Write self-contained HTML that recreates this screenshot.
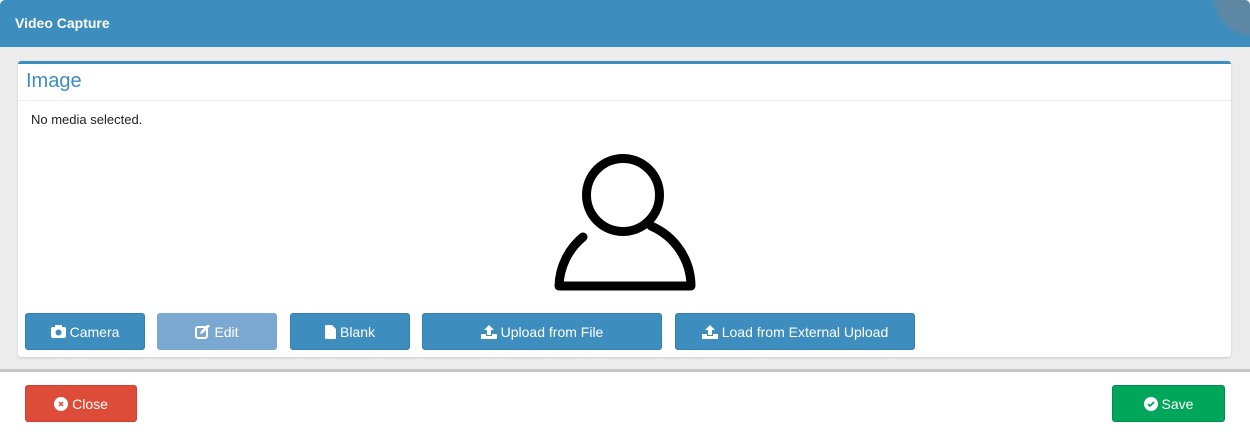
<!DOCTYPE html>
<html><head><meta charset="utf-8"><style>
*{box-sizing:border-box;margin:0;padding:0}
body{width:1250px;height:434px;background:#fff;font-family:"Liberation Sans",sans-serif;position:relative;overflow:hidden}
.hdr{position:absolute;left:0;top:0;width:1250px;height:47px;background:#3d8ebe;border-radius:5px 5px 0 0;overflow:hidden}
.hdr span{position:absolute;left:15px;top:15px;color:#fff;font-weight:bold;font-size:14px}
.hdr i{position:absolute;left:1215px;top:-35px;width:70px;height:70px;border-radius:50%;background:#5e88a4;filter:blur(2px)}
.bg{position:absolute;left:0;top:47px;width:1250px;height:322px;background:#ececec}
.line{position:absolute;left:0;top:369px;width:1250px;height:3px;background:#c4c4c4}
.panel{position:absolute;left:18px;top:61px;width:1213px;height:296px;background:#fff;border-top:3px solid #3d8ebe;border-radius:3px;box-shadow:0 1px 2px #ccc}
.title{height:37px;border-bottom:1px solid #eee;color:#3d8ebe;font-size:20px;padding:6px 0 0 8px}
.msg{position:absolute;left:13px;top:48px;font-size:13px;color:#222}
.btn{position:absolute;height:37px;border-radius:3px;color:#fff;font-size:14px;display:flex;align-items:center;justify-content:center;gap:4px}
.b{background:#3d8ebe;border:1px solid #3580ad;top:313px}
.dis{background:#7ba8d1;border:1px solid #7ba8d1}
svg{display:block}
</style></head><body>
<div class="hdr"><span>Video Capture</span><i></i></div>
<div class="bg"></div>
<div class="line"></div>
<div class="panel"><div class="title">Image</div><div class="msg">No media selected.</div>
<svg style="position:absolute;left:0;top:0" width="1213" height="296" viewBox="18 64 1213 296">
<g fill="none" stroke="#000" stroke-width="9" stroke-linecap="round" stroke-linejoin="round">
<circle cx="623" cy="195" r="36.5"/>
<path d="M583 237 A66 66 0 0 0 559 286 L691 286 A66 66 0 0 0 651 226"/>
</g></svg>
</div>
<div class="btn b" style="left:25px;width:120px"><svg width="15" height="13" viewBox="0 0 15 13"><rect x="0" y="2" width="15" height="11" rx="2" fill="#fff"/><rect x="4" y="0" width="7" height="3" fill="#fff"/><circle cx="7.5" cy="7.5" r="3" fill="#3d8ebe"/></svg>Camera</div>
<div class="btn b dis" style="left:157px;width:120px"><svg width="15" height="14" viewBox="0 0 15 14"><rect x="1" y="2" width="11" height="11" rx="2" fill="none" stroke="#fff" stroke-width="2"/><path d="M5 9 L6 6 L13 -1 L15 1 L8 8Z" fill="#fff"/></svg>Edit</div>
<div class="btn b" style="left:290px;width:120px"><svg width="11" height="14" viewBox="0 0 11 14"><path d="M1 0H7L11 4V13A1 1 0 0 1 10 14H1A1 1 0 0 1 0 13V1A1 1 0 0 1 1 0Z" fill="#fff"/></svg>Blank</div>
<div class="btn b" style="left:422px;width:240px"><svg width="16" height="14" viewBox="0 0 16 14"><path d="M8 0 L13 5 H10 V10 H6 V5 H3Z M0 9 H5 V11 H11 V9 H16 V14 H0Z" fill="#fff"/></svg>Upload from File</div>
<div class="btn b" style="left:675px;width:240px"><svg width="16" height="14" viewBox="0 0 16 14"><path d="M8 0 L13 5 H10 V10 H6 V5 H3Z M0 9 H5 V11 H11 V9 H16 V14 H0Z" fill="#fff"/></svg>Load from External Upload</div>
<div class="btn" style="left:25px;top:385px;width:112px;background:#dd4b39;border:1px solid #d33f2d"><svg width="14" height="14"><circle cx="7" cy="7" r="7" fill="#fff"/><path d="M5 5L9 9M9 5L5 9" stroke="#dd4b39" stroke-width="1.5"/></svg>Close</div>
<div class="btn" style="left:1112px;top:385px;width:113px;background:#00a65a;border:1px solid #008d4c"><svg width="14" height="14"><circle cx="7" cy="7" r="7" fill="#fff"/><path d="M4 7L6 9L10 5" stroke="#00a65a" stroke-width="1.8" fill="none"/></svg>Save</div>
</body></html>
